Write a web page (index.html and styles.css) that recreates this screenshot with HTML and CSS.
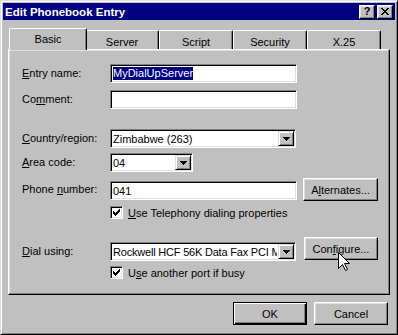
FILE: index.html
```html
<!DOCTYPE html>
<html>
<head>
<meta charset="utf-8">
<title>Edit Phonebook Entry</title>
<link rel="stylesheet" href="styles.css">
</head>
<body>
<div class="window">
  <div class="titlebar">
    <span class="title">Edit Phonebook Entry</span>
    <div class="tbtns">
      <span class="tbtn help">?</span>
      <span class="tbtn close"><svg width="8" height="7" viewBox="0 0 8 7" shape-rendering="crispEdges"><path d="M0 0h2v1h1v1h2v-1h1v-1h2v1h-1v1h-1v1h-1v1h1v1h1v1h1v1h-2v-1h-1v-1h-2v1h-1v1h-2v-1h1v-1h1v-1h1v-1h-1v-1h-1v-1h-1z" fill="#000"/></svg></span>
    </div>
  </div>

  <div class="tabs">
    <div class="tab active">Basic</div>
    <div class="tab">Server</div>
    <div class="tab">Script</div>
    <div class="tab">Security</div>
    <div class="tab">X.25</div>
  </div>

  <div class="panel">
    <div class="row r-entry">
      <span class="lbl"><u>E</u>ntry name:</span>
      <div class="field w187"><span class="sel">MyDialUpServer</span></div>
    </div>
    <div class="row r-comment">
      <span class="lbl">Co<u>m</u>ment:</span>
      <div class="field w187"></div>
    </div>
    <div class="row r-country">
      <span class="lbl"><u>C</u>ountry/region:</span>
      <div class="field combo w186"><span class="ctext">Zimbabwe (263)</span><span class="dd"><svg width="7" height="4" viewBox="0 0 7 4" shape-rendering="crispEdges"><path d="M0 0h7v1h-1v1h-1v1h-1v1h-1v-1h-1v-1h-1v-1h-1z" fill="#000"/></svg></span></div>
    </div>
    <div class="row r-area">
      <span class="lbl"><u>A</u>rea code:</span>
      <div class="field combo w83"><span class="ctext">04</span><span class="dd"><svg width="7" height="4" viewBox="0 0 7 4" shape-rendering="crispEdges"><path d="M0 0h7v1h-1v1h-1v1h-1v1h-1v-1h-1v-1h-1v-1h-1z" fill="#000"/></svg></span></div>
    </div>
    <div class="row r-phone">
      <span class="lbl">Phone <u>n</u>umber:</span>
      <div class="field w187 phonefield"><span class="ctext">041</span></div>
      <div class="btn b-alt">A<u>l</u>ternates...</div>
    </div>
    <div class="row r-check1">
      <span class="check"><svg width="7" height="7" viewBox="0 0 7 7" shape-rendering="crispEdges"><path d="M6 0h1v3h-1v1h-1v1h-1v1h-1v1h-1v-1h-1v-1h-1v-3h1v1h1v1h1v-1h1v-1h1v-1h1z" fill="#000"/></svg></span>
      <span class="clabel"><u>U</u>se Telephony dialing properties</span>
    </div>
    <div class="row r-dial">
      <span class="lbl"><u>D</u>ial using:</span>
      <div class="field combo w186"><span class="ctext dialtext">Rockwell HCF 56K Data Fax PCI Modem</span><span class="dd"><svg width="7" height="4" viewBox="0 0 7 4" shape-rendering="crispEdges"><path d="M0 0h7v1h-1v1h-1v1h-1v1h-1v-1h-1v-1h-1v-1h-1z" fill="#000"/></svg></span></div>
      <div class="btn b-conf">Con<u>f</u>igure...
        <svg class="cursor" width="12" height="20" viewBox="0 0 12 20"><path d="M0.5 0.5V16.5L4.5 12.5L7.5 18.5L9.5 17.5L6.5 11.5H11.5Z" fill="#fff" stroke="#000" stroke-width="1"/></svg>
      </div>
    </div>
    <div class="row r-check2">
      <span class="check"><svg width="7" height="7" viewBox="0 0 7 7" shape-rendering="crispEdges"><path d="M6 0h1v3h-1v1h-1v1h-1v1h-1v1h-1v-1h-1v-1h-1v-3h1v1h1v1h1v-1h1v-1h1v-1h1z" fill="#000"/></svg></span>
      <span class="clabel">U<u>s</u>e another port if busy</span>
    </div>
  </div>

  <div class="footer">
    <div class="btn b-foot default">OK</div>
    <div class="btn b-foot">Cancel</div>
  </div>
</div>
</body>
</html>
```

FILE: styles.css
```css
* { box-sizing: border-box; }
html, body { margin: 0; padding: 0; }
body {
  width: 398px;
  height: 335px;
  overflow: hidden;
  background: #c0c0c0;
  font-family: "Liberation Sans", Arial, sans-serif;
  font-size: 11px;
  color: #000;
}
u { text-decoration: underline; text-underline-offset: 1px; }

.window {
  width: 398px;
  height: 335px;
  background: #c0c0c0;
  border: 1px solid;
  border-color: #dfdfdf #000 #000 #dfdfdf;
  box-shadow: inset 1px 1px #fff, inset -1px -1px #808080;
  padding: 2px;
  display: flex;
  flex-direction: column;
}

.titlebar {
  height: 17px;
  flex: none;
  background: #000080;
  color: #fff;
  display: flex;
  align-items: center;
  justify-content: space-between;
  padding: 0 2px 0 2px;
}
.title {
  font-weight: bold;
  font-size: 11.5px;
  letter-spacing: 0;
}
.tbtns { display: flex; gap: 2px; }
.tbtn {
  width: 16px;
  height: 14px;
  background: #c0c0c0;
  color: #000;
  border: 1px solid;
  border-color: #fff #000 #000 #fff;
  box-shadow: inset -1px -1px #808080, inset 1px 1px #dfdfdf;
  display: flex;
  align-items: center;
  justify-content: center;
  font-weight: bold;
  font-size: 11px;
  line-height: 1;
}

.tabs {
  display: flex;
  align-items: flex-end;
  height: 21px;
  margin-top: 8px;
  padding-left: 8px;
  flex: none;
}
.tab {
  width: 74px;
  height: 19px;
  flex: none;
  background: #c0c0c0;
  border-top: 1px solid #fff;
  border-left: 1px solid #fff;
  border-right: 1px solid #000;
  box-shadow: inset -1px 0 #808080;
  border-radius: 2px 2px 0 0;
  display: flex;
  justify-content: center;
  align-items: center;
  padding-top: 4px;
}
.tab.active {
  width: 78px;
  height: 22px;
  margin: 0 -2px -1px -2px;
  padding-top: 0;
  padding-bottom: 1px;
  position: relative;
  z-index: 1;
}

.panel {
  height: 246px;
  margin: 0 5px;
  flex: none;
  border: 1px solid;
  border-color: #fff #000 #000 #fff;
  box-shadow: inset -1px -1px #808080, inset 1px 1px #dfdfdf;
  padding-left: 13px;
  display: flex;
  flex-direction: column;
}

.row { display: flex; align-items: center; flex: none; }
.lbl {
  width: 88px;
  flex: none;
  height: 19px;
  line-height: 19px;
  white-space: nowrap;
}

.field {
  height: 19px;
  flex: none;
  background: #fff;
  border: 1px solid;
  border-color: #808080 #fff #fff #808080;
  box-shadow: inset 1px 1px #000, inset -1px -1px #dfdfdf;
  padding-left: 2px;
  display: flex;
  align-items: center;
  overflow: hidden;
  white-space: nowrap;
}
.w187 { width: 187px; }
.w186 { width: 186px; }
.w83 { width: 83px; }

.sel {
  background: #000080;
  color: #fff;
  line-height: 13px;
}
.ctext { flex: 1; overflow: hidden; white-space: nowrap; }
.dialtext { letter-spacing: -0.2px; }
.dd {
  width: 16px;
  height: 15px;
  margin: 1px;
  flex: none;
  background: #c0c0c0;
  border: 1px solid;
  border-color: #dfdfdf #000 #000 #dfdfdf;
  box-shadow: inset 1px 1px #fff, inset -1px -1px #808080;
  display: flex;
  align-items: center;
  justify-content: center;
}

.btn {
  height: 23px;
  flex: none;
  background: #c0c0c0;
  border: 1px solid;
  border-color: #fff #000 #000 #fff;
  box-shadow: inset -1px -1px #808080, inset 1px 1px #dfdfdf;
  display: flex;
  align-items: center;
  justify-content: center;
  white-space: nowrap;
}
.btn.default {
  border-color: #000;
  box-shadow: inset 1px 1px #fff, inset -1px -1px #000, inset -2px -2px #808080;
}

.r-entry { margin-top: 14px; }
.r-comment { margin-top: 7px; }
.r-country { margin-top: 20px; }
.r-area { margin-top: 5px; }
.r-phone { margin-top: 6px; }
.phonefield { margin-top: 2px; }
.b-alt { width: 75px; margin-left: 6px; }

.r-check1 { margin-top: 5px; padding-left: 88px; gap: 5px; }
.r-check2 { margin-top: 5px; padding-left: 88px; gap: 5px; }
.check {
  width: 13px;
  height: 13px;
  flex: none;
  background: #fff;
  border: 1px solid;
  border-color: #808080 #fff #fff #808080;
  box-shadow: inset 1px 1px #000, inset -1px -1px #dfdfdf;
  display: flex;
  align-items: center;
  justify-content: center;
}
.clabel { white-space: nowrap; }

.r-dial { margin-top: 18px; align-items: flex-start; }
.r-dial .lbl, .r-dial .field { margin-top: 5px; }
.b-conf { width: 74px; margin-left: 8px; position: relative; }
.cursor { position: absolute; left: 33px; top: 14px; }

.footer {
  display: flex;
  justify-content: flex-end;
  gap: 7px;
  margin-top: 7px;
  padding-right: 7px;
  flex: none;
}
.b-foot { width: 74px; }
```
